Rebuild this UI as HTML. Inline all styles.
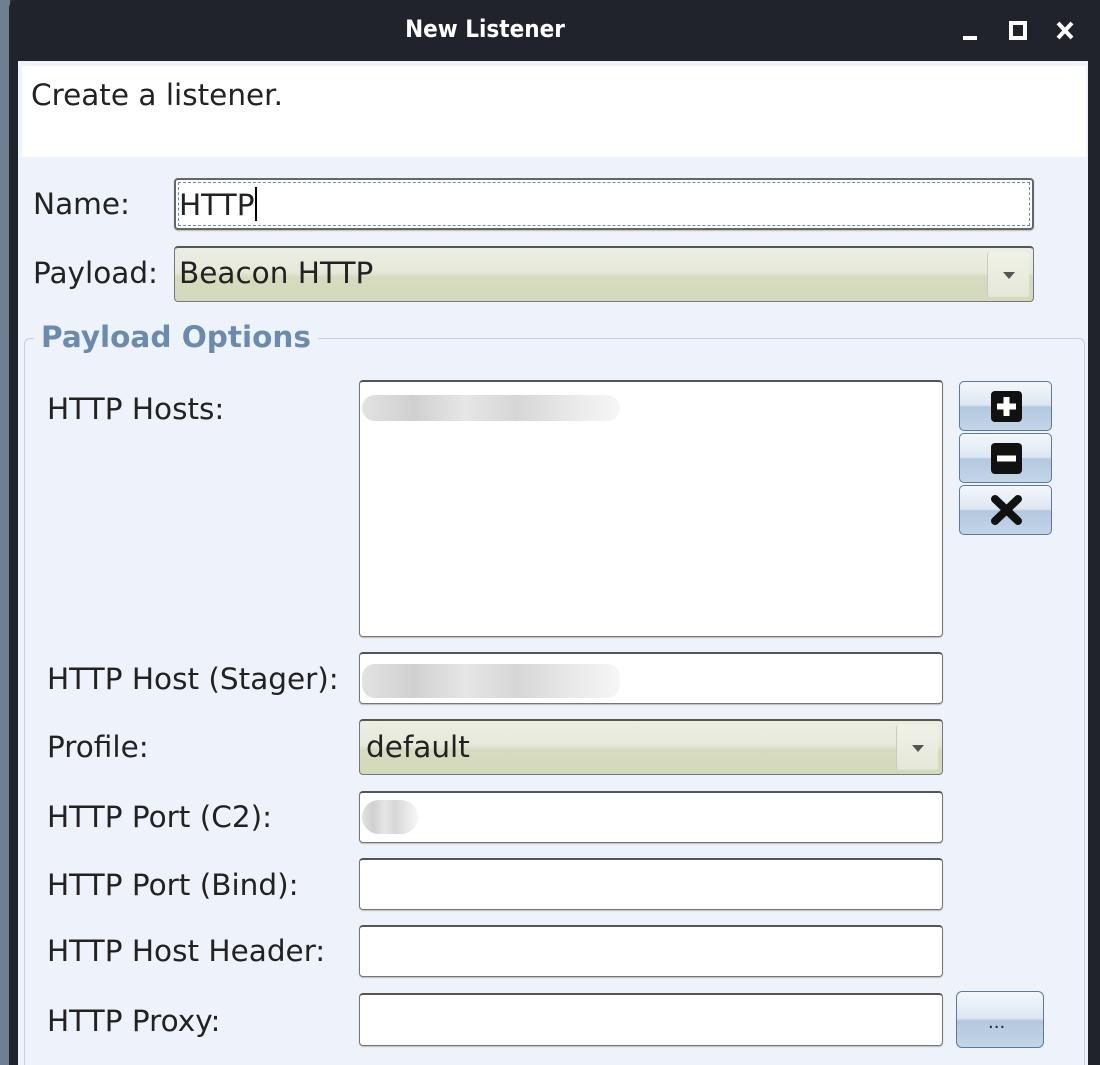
<!DOCTYPE html>
<html><head><meta charset="utf-8"><style>
*{box-sizing:border-box;margin:0;padding:0}
html,body{width:1100px;height:1065px;overflow:hidden}
body{background:#2a2d36;font-family:"DejaVu Sans","Liberation Sans",sans-serif;font-size:29.5px;color:#222;position:relative}
.abs{position:absolute}
.left{left:0;top:0;width:10px;height:1065px;background:#6f7f92}
.win{left:9px;top:0;width:1091px;height:1065px;background:#20232c;border-radius:8px 0 0 0}
.title{left:385px;width:200px;top:15px;text-align:center;color:#fff;font-weight:bold;font-size:24px;font-family:"DejaVu Sans Condensed","DejaVu Sans",sans-serif}
.content{left:18px;top:61px;width:1070px;height:1004px;background:#eef2fa}
.hdr{left:22px;top:66px;width:1064px;height:91px;background:#fff}
.lbl{position:absolute;white-space:nowrap}
.inp{position:absolute;background:#fff;border:1px solid #777;border-top:2px solid #555;border-radius:4px;box-shadow:0 1px 1px #bbb}
.combo{position:absolute;border:1px solid #777;border-top:2px solid #555;border-radius:4px;background:linear-gradient(#eceee2 0%,#e6e9da 45%,#d6dbbf 55%,#d4d9bc 100%)}
.combo .arr{position:absolute;right:4px;top:4px;bottom:4px;width:42px;border-left:1px solid #c8ccb8;border-radius:3px;background:linear-gradient(#f0f2e8,#e4e7d8)}
.combo .arr:after{content:"";position:absolute;left:15px;top:20px;border-left:6px solid transparent;border-right:6px solid transparent;border-top:7px solid #555}
.btn{position:absolute;border:1px solid #5d7a98;border-radius:5px;background:linear-gradient(#f4f7fb 0%,#dde7f2 48%,#b3c8df 52%,#c3d5e8 100%)}
.fs{left:24px;top:338px;width:1061px;height:740px;border:1px solid #c2d0e0;border-radius:6px}
.legend{left:34px;top:320px;background:#eef2fa;padding:0 7px;color:#6a8aae;font-weight:bold;font-size:29.5px}
.blur{position:absolute;height:26px;background:linear-gradient(90deg,#e2e2e2,#d0d0d0 20%,#e6e6e6 40%,#d6d6d6 60%,#e8e8e8 80%,#f6f6f6);border-radius:13px}
</style></head><body>
<div class="abs left"></div>
<div class="abs win"></div>
<div class="abs title">New Listener</div>
<svg class="abs" style="left:955px;top:16px" width="130" height="30">
<rect x="8" y="20" width="14" height="4" fill="#fff"/>
<rect x="56" y="7" width="14" height="15" fill="none" stroke="#fff" stroke-width="4"/>
<path d="M103 7 L117 22 M117 7 L103 22" stroke="#fff" stroke-width="4"/>
</svg>
<div class="abs content"></div>
<div class="abs hdr"></div>
<div class="lbl" style="left:31px;top:78px">Create a listener.</div>

<div class="lbl" style="left:33px;top:187px">Name:</div>
<div class="inp" style="left:174px;top:178px;width:860px;height:52px;border:2px solid #666;outline:1px dashed #6d8ab0;outline-offset:-5px"></div>
<div class="lbl" style="left:179px;top:187px">HTTP<span style="display:inline-block;width:2px;height:34px;background:#000;vertical-align:-6px"></span></div>

<div class="lbl" style="left:33px;top:256px">Payload:</div>
<div class="combo" style="left:174px;top:246px;width:860px;height:56px"><div class="arr"></div></div>
<div class="lbl" style="left:179px;top:256px">Beacon HTTP</div>

<div class="abs fs"></div>
<div class="abs legend">Payload Options</div>

<div class="lbl" style="left:47px;top:392px">HTTP Hosts:</div>
<div class="inp" style="left:359px;top:380px;width:584px;height:257px"></div>
<div class="blur" style="left:362px;top:395px;width:258px"></div>

<div class="btn" style="left:959px;top:381px;width:93px;height:50px"></div>
<div class="btn" style="left:959px;top:433px;width:93px;height:50px"></div>
<div class="btn" style="left:959px;top:485px;width:93px;height:50px"></div>
<svg class="abs" style="left:959px;top:381px" width="93" height="160">
<rect x="32" y="10" width="31" height="31" rx="4" fill="#111"/>
<path d="M47.5 16v19M38 25.5h19" stroke="#fff" stroke-width="6"/>
<rect x="32" y="62" width="31" height="31" rx="4" fill="#111"/>
<path d="M38 77.5h19" stroke="#fff" stroke-width="6"/>
<path d="M36 118 L59 140 M59 118 L36 140" stroke="#111" stroke-width="8" stroke-linecap="round"/>
</svg>

<div class="lbl" style="left:47px;top:662px">HTTP Host (Stager):</div>
<div class="inp" style="left:359px;top:652px;width:584px;height:52px"></div>
<div class="blur" style="left:362px;top:664px;width:258px;height:34px"></div>

<div class="lbl" style="left:47px;top:730px">Profile:</div>
<div class="combo" style="left:359px;top:719px;width:584px;height:56px"><div class="arr"></div></div>
<div class="lbl" style="left:366px;top:730px">default</div>

<div class="lbl" style="left:47px;top:800px">HTTP Port (C2):</div>
<div class="inp" style="left:359px;top:791px;width:584px;height:52px"></div>
<div class="blur" style="left:362px;top:800px;width:56px;height:34px;border-radius:17px"></div>

<div class="lbl" style="left:47px;top:868px">HTTP Port (Bind):</div>
<div class="inp" style="left:359px;top:858px;width:584px;height:52px"></div>

<div class="lbl" style="left:47px;top:934px">HTTP Host Header:</div>
<div class="inp" style="left:359px;top:925px;width:584px;height:52px"></div>

<div class="lbl" style="left:47px;top:1004px">HTTP Proxy:</div>
<div class="inp" style="left:359px;top:993px;width:584px;height:53px"></div>
<div class="btn" style="left:956px;top:991px;width:88px;height:57px;border-radius:6px"></div>
<div class="lbl" style="left:988px;top:1012px;font-size:18px">...</div>
</body></html>
